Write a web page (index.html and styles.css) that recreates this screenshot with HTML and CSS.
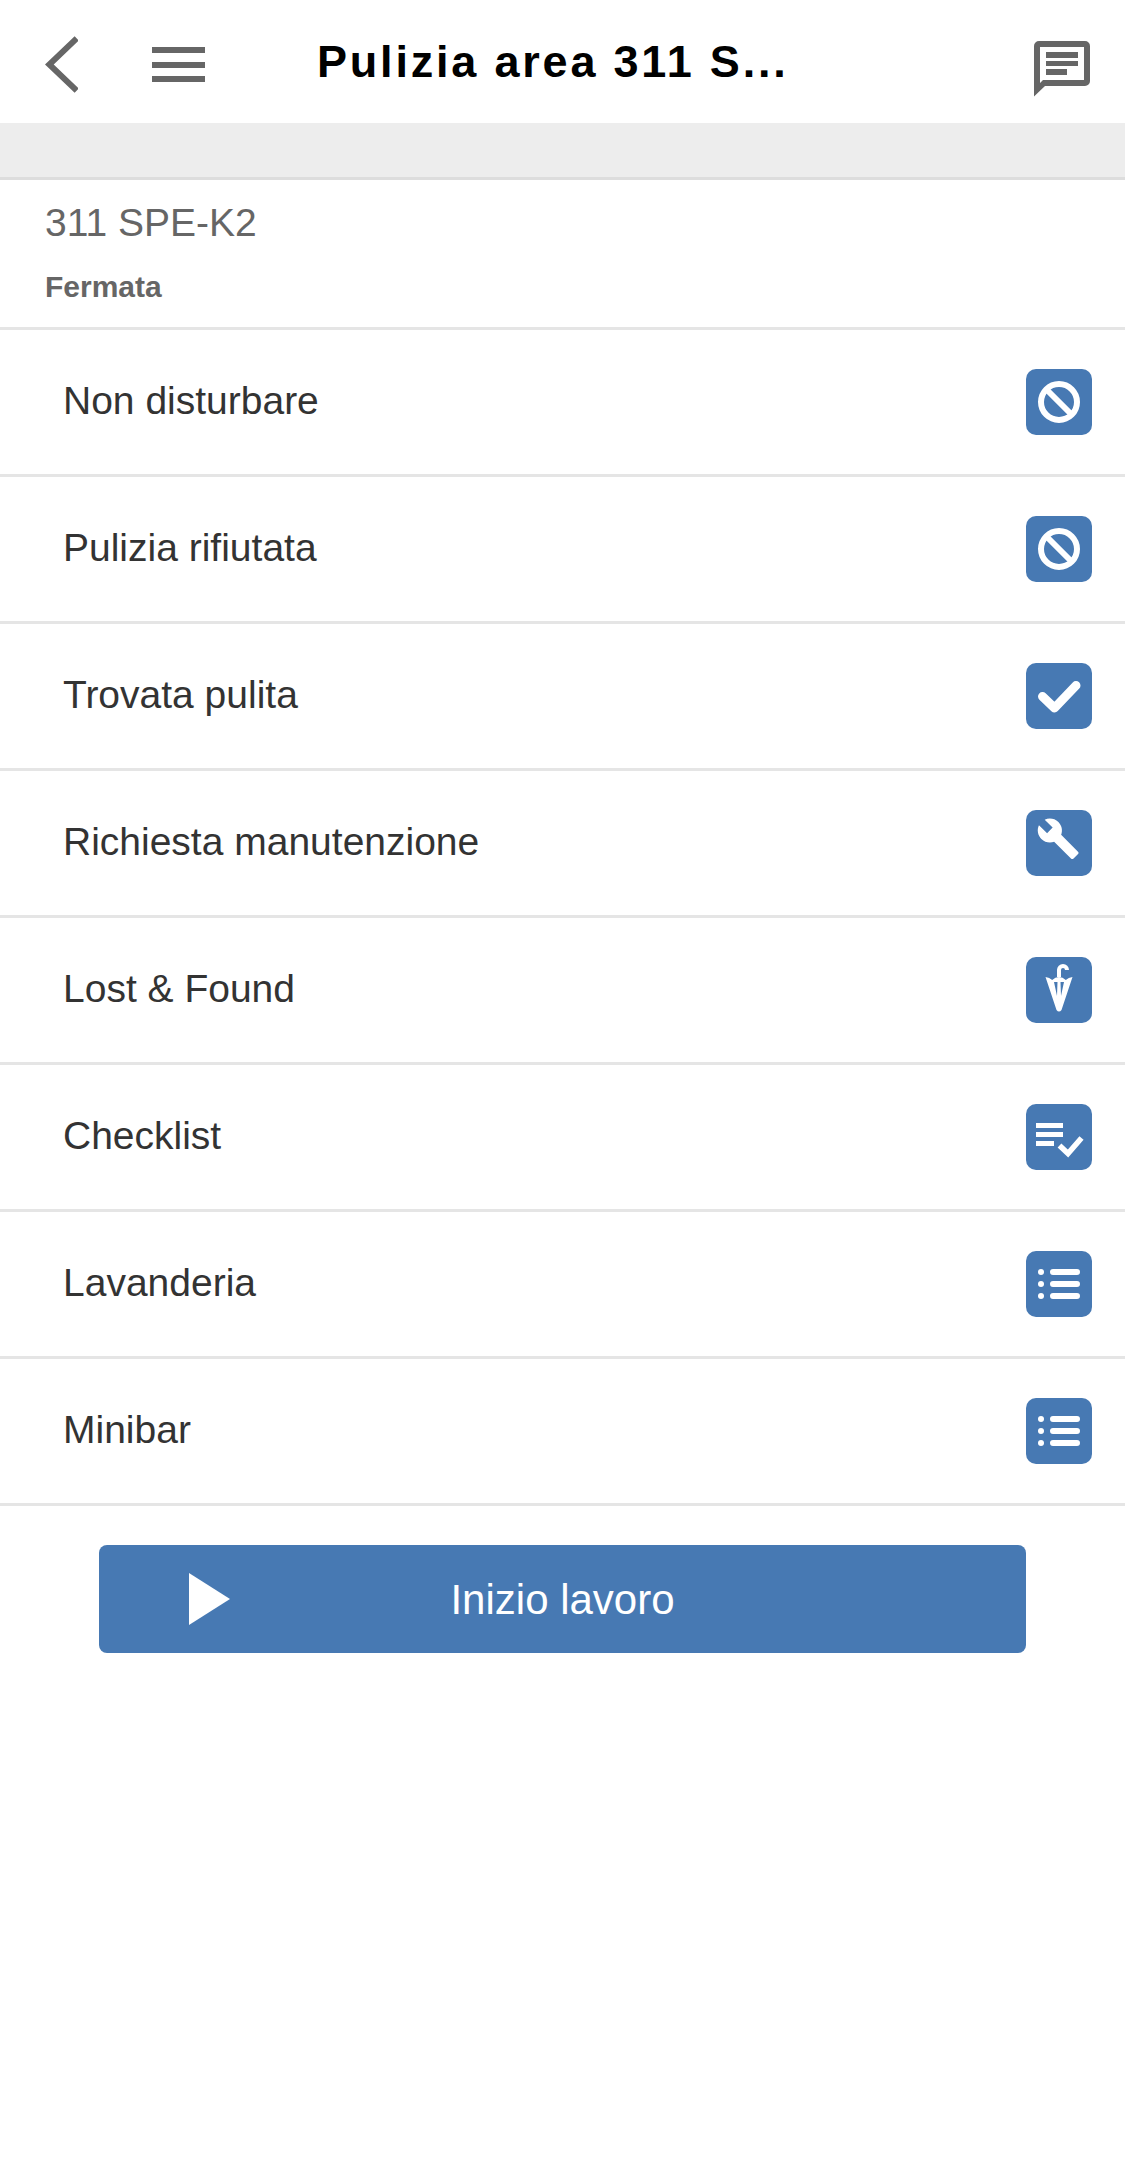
FILE: index.html
```html
<!DOCTYPE html>
<html lang="en">
<head>
    <meta charset="UTF-8">
    <meta name="viewport" content="width=device-width, initial-scale=1.0">
    <title>Pulizia area</title>
    <link rel="stylesheet" href="styles.css">
</head>
<body>
    <header class="topbar">
        <svg class="back-icon" width="33" height="57" viewBox="0 0 33 57"><path d="M31.700 2.400L4.300 28.500 31.700 54.600" fill="none" stroke="#666" stroke-width="6"/></svg>
        <svg class="menu-icon" width="53" height="35" viewBox="0 0 53 35"><path d="M0 0h53v6H0zM0 15h53v6H0zM0 29h53v6H0z" fill="#666"/></svg>
        <h1 class="title">Pulizia area 311 S...</h1>
        <svg class="chat-icon" width="56" height="56" viewBox="0 0 56 56"><path d="M5 0h46a5 5 0 0 1 5 5v35a5 5 0 0 1-5 5H11L0 55.500V5a5 5 0 0 1 5-5zM6 6v36l3-3h41V6z" fill="#666" fill-rule="evenodd"/><path d="M12 11h32v6H12zM12 20h32v5H12zM12 28h21v6H12z" fill="#666"/></svg>
    </header>
    <div class="strip"></div>
    <section class="room">
        <div class="room-name">311 SPE-K2</div>
        <div class="room-status">Fermata</div>
    </section>
    <ul class="actions">
        <li class="action">
            <span>Non disturbare</span>
            <svg class="badge" viewBox="0 0 66 66"><circle cx="33" cy="33" r="18" fill="none" stroke="#fff" stroke-width="6"/><path d="M20 20l26 26" stroke="#fff" stroke-width="6"/></svg>
        </li>
        <li class="action">
            <span>Pulizia rifiutata</span>
            <svg class="badge" viewBox="0 0 66 66"><circle cx="33" cy="33" r="18" fill="none" stroke="#fff" stroke-width="6"/><path d="M20 20l26 26" stroke="#fff" stroke-width="6"/></svg>
        </li>
        <li class="action">
            <span>Trovata pulita</span>
            <svg class="badge" viewBox="0 0 66 66"><path d="M16.500 33.500L28.500 45 50 22.500" fill="none" stroke="#fff" stroke-width="9" stroke-linecap="round" stroke-linejoin="round"/></svg>
        </li>
        <li class="action">
            <span>Richiesta manutenzione</span>
            <svg class="badge" viewBox="0 0 66 66"><path transform="translate(10 6.500) scale(1.85)" d="M22.700 19l-9.100-9.100c.9-2.300.4-5-1.500-6.900-2-2-5-2.400-7.400-1.300L9 6 6 9 1.600 4.700C.4 7.100.9 10.100 2.900 12.100c1.900 1.900 4.600 2.400 6.900 1.500l9.100 9.100c.4.4 1 .4 1.400 0l2.300-2.300c.5-.4.5-1.100.1-1.400z" fill="#fff"/></svg>
        </li>
        <li class="action">
            <span>Lost &amp; Found</span>
            <svg class="badge" viewBox="0 0 66 66"><path d="M33 20v-7a4 4 0 0 1 8 0" fill="none" stroke="#fff" stroke-width="4"/><path d="M19.500 20q4 .5 6.700 3 3-3 6.800-3 3.800 0 6.800 3 2.700-2.500 6.700-3L35.500 53q-2.500 3-5 0z" fill="#fff"/><path d="M28 25l3 14 .5-14zM38 25l-3 14-.5-14z" fill="#4779b3"/></svg>
        </li>
        <li class="action">
            <span>Checklist</span>
            <svg class="badge" viewBox="0 0 66 66"><path d="M10 19h27v5H10zM10 28h27v5H10zM10 37h18v5H10z" fill="#fff"/><path d="M33.500 41.500l8.500 8L55.500 34" fill="none" stroke="#fff" stroke-width="5.500"/></svg>
        </li>
        <li class="action">
            <span>Lavanderia</span>
            <svg class="badge" viewBox="0 0 66 66"><path d="M27 21h24M27 33h24M27 45h24" stroke="#fff" stroke-width="6" stroke-linecap="round"/><circle cx="15" cy="21" r="3" fill="#fff"/><circle cx="15" cy="33" r="3" fill="#fff"/><circle cx="15" cy="45" r="3" fill="#fff"/></svg>
        </li>
        <li class="action">
            <span>Minibar</span>
            <svg class="badge" viewBox="0 0 66 66"><path d="M27 21h24M27 33h24M27 45h24" stroke="#fff" stroke-width="6" stroke-linecap="round"/><circle cx="15" cy="21" r="3" fill="#fff"/><circle cx="15" cy="33" r="3" fill="#fff"/><circle cx="15" cy="45" r="3" fill="#fff"/></svg>
        </li>
    </ul>
    <div class="start-wrap">
        <button class="start-btn">
            <svg class="play-icon" width="41" height="52" viewBox="0 0 41 52"><path d="M0 0L41 26 0 52z" fill="#fff"/></svg>
            Inizio lavoro
        </button>
    </div>
</body>
</html>
```

FILE: styles.css
```css
body {
    font-family: "Liberation Sans", Arial, sans-serif;
    margin: 0;
    padding: 0;
    background-color: #fff;
}
.topbar {
    height: 123px;
    box-sizing: border-box;
    display: flex;
    align-items: center;
    position: relative;
    padding: 6px 0 0 45px;
}
.menu-icon {
    margin-left: 74px;
}
.title {
    margin: 0 0 6px 112px;
    font-size: 45px;
    font-weight: bold;
    letter-spacing: 2.8px;
    color: #000;
    white-space: nowrap;
}
.chat-icon {
    position: absolute;
    left: 1034px;
    top: 41px;
}
.strip {
    height: 54px;
    background-color: #ededed;
    border-bottom: 3px solid #ddd;
}
.room {
    height: 150px;
    box-sizing: border-box;
    padding: 20px 0 0 45px;
    border-bottom: 3px solid #e5e5e5;
    color: #666;
}
.room-name {
    font-size: 39px;
    line-height: 46px;
}
.room-status {
    font-size: 30px;
    font-weight: bold;
    line-height: 32px;
    margin-top: 25px;
}
.actions {
    list-style: none;
    margin: 0;
    padding: 0;
}
.action {
    height: 147px;
    box-sizing: border-box;
    display: flex;
    align-items: center;
    justify-content: space-between;
    padding: 0 33px 0 63px;
    border-bottom: 3px solid #e5e5e5;
    font-size: 39px;
    color: #333;
}
.action span {
    margin-bottom: 3px;
}
.badge {
    width: 66px;
    height: 66px;
    background-color: #4779b3;
    border-radius: 10px;
}
.start-wrap {
    padding: 39px 99px 0 99px;
}
.start-btn {
    width: 100%;
    height: 108px;
    position: relative;
    background-color: #4779b3;
    color: #fff;
    border: none;
    border-radius: 8px;
    font-family: inherit;
    font-size: 42px;
    padding: 2px 0 0 0;
}
.play-icon {
    position: absolute;
    left: 90px;
    top: 28px;
}
```
